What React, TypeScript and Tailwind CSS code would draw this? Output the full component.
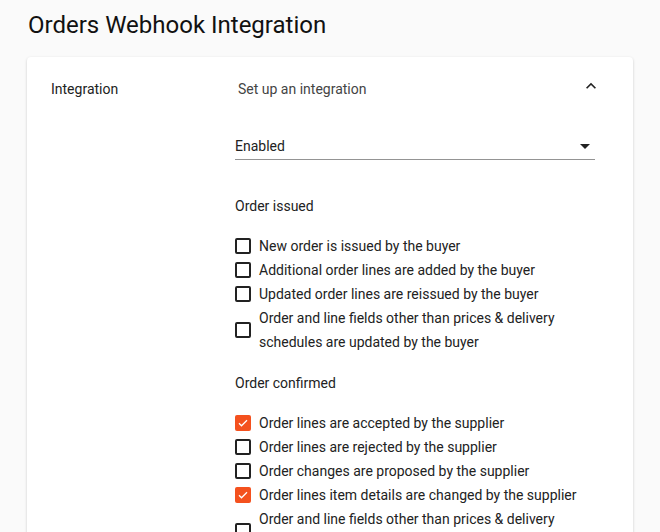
import React from "react";

const font = { fontFamily: "Roboto, 'Noto Sans', Arial, sans-serif" };

function Box({ checked }: { checked?: boolean }) {
  if (checked) {
    return (
      <span className="flex h-[16px] w-[16px] shrink-0 items-center justify-center rounded-[2px] bg-[#f4511e]">
        <svg width="12" height="12" viewBox="0 0 24 24" fill="none">
          <path d="M4 12.5l5 5L20 6.5" stroke="white" strokeWidth="2.6" />
        </svg>
      </span>
    );
  }
  return <span className="h-[16px] w-[16px] shrink-0 rounded-[2px] border-2 border-[#222]" />;
}

function Row({ label, checked }: { label: React.ReactNode; checked?: boolean }) {
  return (
    <div className="flex items-center gap-2 text-[14px] leading-6 text-[#222]">
      <Box checked={checked} />
      <span>{label}</span>
    </div>
  );
}

export default function App() {
  return (
    <div className="min-h-[532px] bg-[#fafafa] px-[27px] pt-[9px]" style={font}>
      <h1 className="pl-px text-[24px] leading-8 text-[#111]">Orders Webhook Integration</h1>
      <div className="mt-4 rounded bg-white pb-10 pl-6 pr-6 pt-5 shadow-[0_1px_3px_rgba(0,0,0,0.18),0_1px_1px_rgba(0,0,0,0.06)]">
        <div className="flex">
          <div className="w-[184px] shrink-0 text-[14px] leading-6 text-[#222]">Integration</div>
          <div className="w-[360px]">
            <div className="flex h-6 items-center justify-between">
              <span className="pl-[3px] text-[14px] text-[#444]">Set up an integration</span>
              <svg width="20" height="20" viewBox="0 0 24 24" className="relative -top-[3px] mr-[-6px]">
                <path d="M12 8l-6 6 1.41 1.41L12 10.83l4.59 4.58L18 14z" fill="#222" />
              </svg>
            </div>
            <div className="relative mt-[33px] h-[26px] border-b border-[#949494] text-[14px] leading-6 text-[#222]">
              Enabled
              <svg width="24" height="24" viewBox="0 0 24 24" className="absolute right-[-2px] top-0">
                <path d="M7 10l5 5 5-5z" fill="#222" />
              </svg>
            </div>
            <div className="mt-[34px] text-[14px] leading-6 text-[#222]">Order issued</div>
            <div className="mt-4 flex flex-col">
              <Row label="New order is issued by the buyer" />
              <Row label="Additional order lines are added by the buyer" />
              <Row label="Updated order lines are reissued by the buyer" />
              <Row
                label={
                  <>
                    Order and line fields other than prices &amp; delivery
                    <br />
                    schedules are updated by the buyer
                  </>
                }
              />
            </div>
            <div className="mt-[17px] text-[14px] leading-6 text-[#222]">Order confirmed</div>
            <div className="mt-4 flex flex-col">
              <Row checked label="Order lines are accepted by the supplier" />
              <Row label="Order lines are rejected by the supplier" />
              <Row label="Order changes are proposed by the supplier" />
              <Row checked label="Order lines item details are changed by the supplier" />
              <Row
                label={
                  <>
                    Order and line fields other than prices &amp; delivery
                    <br />
                    schedules are updated by the supplier
                  </>
                }
              />
            </div>
          </div>
        </div>
      </div>
    </div>
  );
}
